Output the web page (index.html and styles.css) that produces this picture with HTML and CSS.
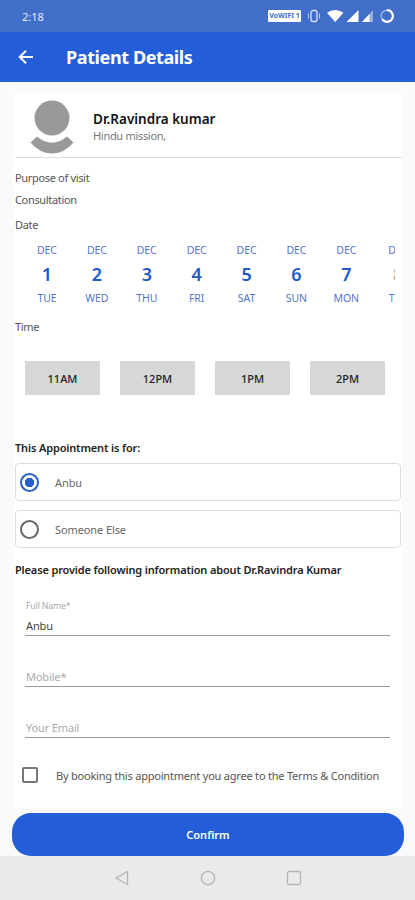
FILE: index.html
```html
<!DOCTYPE html>
<html lang="en">
<head>
  <meta charset="UTF-8">
  <meta name="viewport" content="width=device-width, initial-scale=1.0">
  <title>Patient Details</title>
  <link rel="stylesheet" href="styles.css">
</head>
<body>

  <div class="status-bar">
    <span class="clock">2:18</span>
    <span class="vowifi">VoWIFI 1</span>
    <svg class="status-icons" width="96" height="16" viewBox="0 0 96 16">
      <g fill="none" stroke="#fff">
        <rect x="4" y="2.500" width="6" height="11" rx="2" stroke-width="1.300" opacity=".8"/>
        <path d="M1.500 5.500v5M12.500 5.500v5" opacity=".6"/>
        <circle cx="80" cy="8" r="5.800" stroke-width="1.200" opacity=".6"/>
        <path d="M80 2.200a5.800 5.800 0 1 1-4.800 9" stroke-width="2.200"/>
      </g>
      <path d="M20 4.800q8-5.600 16.500 0L28.200 14z" fill="#fff"/>
      <path d="M51.500 2v12H39.500z" fill="#fff"/>
      <path d="M66 2v12H55z" fill="#fff" opacity=".45"/>
      <path d="M62.500 6v8H55z" fill="#fff"/>
    </svg>
  </div>

  <div class="app-bar">
    <svg class="back" width="16" height="16" viewBox="0 0 16 16">
      <path d="M15 8H2M8 1.700L1.700 8 8 14.300" fill="none" stroke="#fff" stroke-width="2"/>
    </svg>
    <h1>Patient Details</h1>
  </div>

  <div class="card">
    <div class="doctor">
      <svg width="44" height="54" viewBox="0 0 44 54" fill="#999">
        <circle cx="22" cy="18" r="17.500"/>
        <path d="M7 36.500Q22 49 37 36.500L43.500 42.500Q34 53.500 22 53.500T.5 42.500z"/>
      </svg>
      <div>
        <div class="doctor-name">Dr.Ravindra kumar</div>
        <div class="hospital">Hindu mission,</div>
      </div>
    </div>

    <div class="label purpose">Purpose of visit</div>
    <div class="label consultation">Consultation</div>
    <div class="label date">Date</div>

    <div class="days">
      <div class="day"><span>DEC</span><b>1</b><span>TUE</span></div>
      <div class="day"><span>DEC</span><b>2</b><span>WED</span></div>
      <div class="day"><span>DEC</span><b>3</b><span>THU</span></div>
      <div class="day"><span>DEC</span><b>4</b><span>FRI</span></div>
      <div class="day"><span>DEC</span><b>5</b><span>SAT</span></div>
      <div class="day"><span>DEC</span><b>6</b><span>SUN</span></div>
      <div class="day"><span>DEC</span><b>7</b><span>MON</span></div>
      <div class="day next"><span>DEC</span><b>8</b><span>TUE</span></div>
    </div>

    <div class="label time">Time</div>
    <div class="slots">
      <button>11AM</button>
      <button>12PM</button>
      <button>1PM</button>
      <button>2PM</button>
    </div>

    <h2 class="for">This Appointment is for:</h2>
    <div class="option"><i class="radio checked"></i><span>Anbu</span></div>
    <div class="option"><i class="radio"></i><span>Someone Else</span></div>

    <h2 class="info">Please provide following information about Dr.Ravindra Kumar</h2>
    <div class="field">
      <small>Full Name*</small>
      <span class="value">Anbu</span>
    </div>
    <div class="field"><span>Mobile*</span></div>
    <div class="field"><span>Your Email</span></div>

    <div class="terms">
      <i class="checkbox"></i>
      <span>By booking this appointment you agree to the Terms &amp; Condition</span>
    </div>
  </div>

  <button class="confirm">Confirm</button>

  <div class="nav-bar">
    <svg width="16" height="16" viewBox="0 0 16 16"><path d="M13.500 1.500v13L2 8z"/></svg>
    <svg width="16" height="16" viewBox="0 0 16 16"><circle cx="8" cy="8" r="6.700"/></svg>
    <svg width="16" height="16" viewBox="0 0 16 16"><rect x="1.500" y="1.500" width="13" height="13" rx="1.500"/></svg>
  </div>

</body>
</html>
```

FILE: styles.css
```css
* {
  box-sizing: border-box;
}

body {
  margin: 0;
  height: 900px;
  display: flex;
  flex-direction: column;
  background: #fafafa;
  font-family: 'Noto Sans', sans-serif;
  color: #555;
  overflow: hidden;
}

h1, h2 {
  margin: 0;
  white-space: nowrap;
}

button {
  border: none;
  padding: 0;
  font-family: inherit;
}

.status-bar {
  height: 32px;
  display: flex;
  align-items: center;
  padding: 0 12px 0 22px;
  background: #416ec9;
  color: #e3eafa;
}

.clock {
  font-size: 11px;
  flex: 1;
}

.vowifi {
  width: 33px;
  height: 12px;
  margin-right: 6px;
  border-radius: 1px;
  background: #fff;
  color: #416ec9;
  font-size: 7px;
  font-weight: bold;
  line-height: 12px;
  text-align: center;
}

.app-bar {
  height: 50px;
  display: flex;
  align-items: center;
  gap: 32px;
  padding-left: 18px;
  background: #235ed8;
  color: #fff;
}

.app-bar h1 {
  font-size: 18px;
  font-weight: 700;
  letter-spacing: -0.4px;
}

.card {
  height: 714px;
  margin: 11px 13px 6px 14px;
  padding-left: 1px;
  background: #fff;
}

.doctor {
  height: 65px;
  display: flex;
  gap: 19px;
  padding: 7px 0 0 15px;
  border-bottom: 1px solid #ddd;
}

.doctor-name {
  margin-top: 10px;
  font-size: 13.5px;
  font-weight: 600;
  line-height: 18px;
  color: #111;
}

.hospital {
  font-size: 11px;
  line-height: 15px;
  letter-spacing: -0.3px;
  color: #777;
}

.label {
  font-size: 11px;
  line-height: 16px;
  letter-spacing: -0.33px;
}

.purpose {
  margin-top: 12px;
}

.consultation {
  margin-top: 6px;
}

.date {
  margin-top: 9px;
}

.days {
  width: 380px;
  height: 68px;
  display: flex;
  margin-top: 8px;
  padding-left: 7px;
  overflow: hidden;
}

.day {
  flex: 0 0 49.9px;
  display: flex;
  flex-direction: column;
  align-items: center;
  font-size: 10.5px;
  line-height: 18px;
  letter-spacing: -0.1px;
  color: #5476c9;
}

.day b {
  font-size: 18px;
  font-weight: 600;
  line-height: 30px;
  color: #2159cc;
}

.day.next {
  margin-left: 2px;
}

.day.next b {
  color: #aaa;
}

.time {
  margin-top: 10px;
}

.slots {
  display: grid;
  grid-template-columns: repeat(4, 75px);
  gap: 20px;
  margin: 26px 0 0 10px;
}

.slots button {
  height: 34px;
  border-radius: 1px;
  background: #d5d8d7;
  color: #222;
  font-size: 11px;
  font-weight: 500;
}

h2 {
  font-size: 11px;
  font-weight: 600;
  line-height: 16px;
  letter-spacing: -0.15px;
  color: #222;
}

.for {
  margin: 45px 0 7px;
}

.option {
  width: 386px;
  height: 38px;
  display: flex;
  align-items: center;
  gap: 16px;
  margin-bottom: 9px;
  padding-left: 4px;
  border: 1px solid #ddd;
  border-radius: 4px;
  font-size: 11px;
  letter-spacing: -0.1px;
  color: #666;
}

.radio {
  width: 19px;
  height: 19px;
  border: 2px solid #666;
  border-radius: 50%;
}

.radio.checked {
  border-color: #2860c8;
  background: radial-gradient(circle, #2860c8 4.5px, #fff 5px);
}

.info {
  margin: 14px 0 7px;
}

.field {
  width: 365px;
  height: 51px;
  display: flex;
  flex-direction: column;
  justify-content: flex-end;
  margin-left: 10px;
  padding: 0 0 1px 1px;
  border-bottom: 1px solid #999;
  font-size: 11px;
  line-height: 16px;
  letter-spacing: -0.15px;
  color: #aaa;
}

.field small {
  margin-bottom: 4px;
  font-size: 8.7px;
  line-height: 15px;
}

.field .value {
  color: #444;
}

.terms {
  display: flex;
  align-items: center;
  gap: 18px;
  margin: 29px 0 0 7px;
  font-size: 11px;
  letter-spacing: -0.21px;
  white-space: nowrap;
}

.checkbox {
  width: 16px;
  height: 16px;
  border: 2px solid #777;
  border-radius: 2px;
}

.confirm {
  height: 43px;
  margin: 0 11px 0 12px;
  border-radius: 19px;
  background: #235ed8;
  color: #fff;
  font-size: 11px;
  font-weight: 600;
}

.nav-bar {
  height: 44px;
  display: flex;
  justify-content: center;
  align-items: center;
  gap: 70px;
  background: #eaeaea;
}

.nav-bar svg {
  fill: none;
  stroke: #b5b5b5;
  stroke-width: 1.3;
}
```
